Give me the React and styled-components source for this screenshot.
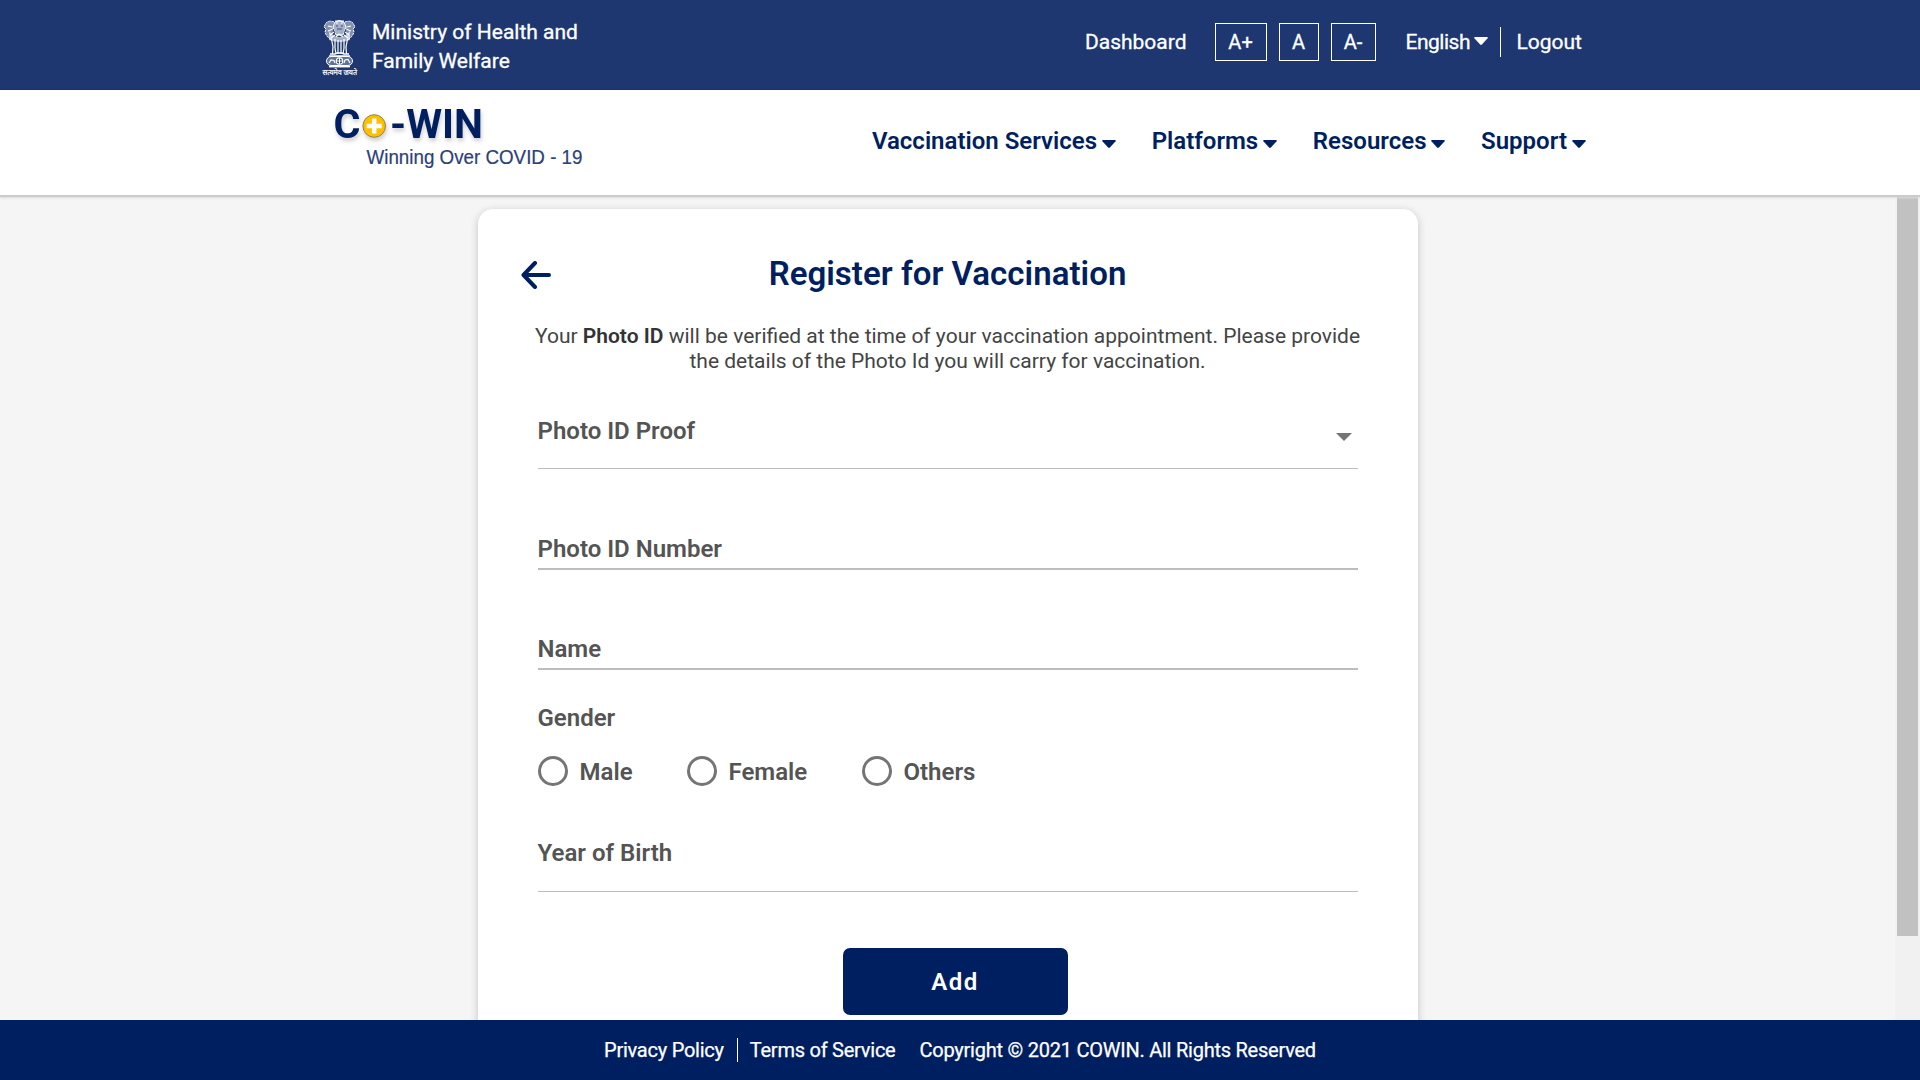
import React from "react";
import styled, { createGlobalStyle } from "styled-components";

const NAVY = "#001f60";

const Global = createGlobalStyle`
  * { box-sizing: border-box; }
  body { margin: 0; background: #f5f5f5; font-family: Roboto, "Noto Sans", sans-serif; overflow: hidden; }
  p, h1 { margin: 0; }
`;

const Page = styled.div`
  display: flex;
  flex-direction: column;
  height: 1080px;
  width: 1920px;
`;

const TopBar = styled.header`
  flex: none;
  height: 90px;
  background: #1e3770;
  border-bottom: 1px solid #1a2f6b;
  color: #fff;
  display: flex;
  justify-content: space-between;
  padding: 0 338px 0 321px;
  font-size: 21px;
  -webkit-text-stroke: 0.3px #fff;
`;

const Ministry = styled.div`
  display: flex;
  gap: 14px;
  padding-top: 17px;
`;

const MinistryName = styled.p`
  font-size: 21px;
  line-height: 29px;
  padding-top: 1px;
  width: 230px;
`;

const Tools = styled.nav`
  display: flex;
  align-items: center;
  height: 84px;
`;

const ToolLink = styled.a`
  line-height: 30px;
  margin-right: ${(p) => p.$gap || 0}px;
  letter-spacing: ${(p) => p.$spacing || 0}px;
`;

const SizeButton = styled.button`
  width: ${(p) => p.$width}px;
  height: 38px;
  padding: 0;
  margin-right: ${(p) => p.$gap}px;
  border: 1px solid #fff;
  background: none;
  color: #fff;
  font: 400 20px Roboto, sans-serif;
`;

const Divider = styled.span`
  width: 1px;
  height: ${(p) => p.$height}px;
  background: #fff;
  margin: 0 ${(p) => p.$right}px 0 ${(p) => p.$left}px;
`;

const BrandBar = styled.div`
  flex: none;
  position: relative;
  z-index: 1;
  height: 105px;
  background: #fff;
  box-shadow: 0 2px 0 #cbcbcb, 0 3px 2px #dcdcdc;
  display: flex;
  justify-content: space-between;
  padding: 0 334px 0 326px;
`;

const MainNav = styled.nav`
  display: flex;
  gap: 35.6px;
  padding-top: 36px;
`;

const NavItem = styled.a`
  display: flex;
  gap: 5px;
  font-size: 24px;
  line-height: 30px;
  font-weight: 600;
  color: ${NAVY};
  svg { margin-top: 14px; }
`;

const Body = styled.div`
  flex: 1;
  min-height: 0;
  display: flex;
  background: #f5f5f5;
`;

const Scroller = styled.main`
  flex: 1;
  overflow: hidden;
  padding-top: 14px;
`;

const Track = styled.div`
  width: 25px;
  background: #f1f1f1;
  padding: 0 2px;
`;

const Thumb = styled.div`
  height: 741px;
  background: #c1c1c1;
`;

const Card = styled.section`
  width: 940px;
  height: 900px;
  margin: 0 auto;
  padding: 44px 60px 0;
  border-radius: 15px;
  background: #fff;
  box-shadow: 0 2px 8px rgba(0, 0, 0, 0.2);
`;

const TitleRow = styled.div`
  display: grid;
  grid-template-columns: 30px 1fr 30px;
  margin: 0 -17px;
  height: 42px;
  svg { margin-top: 8px; }
`;

const Title = styled.h1`
  font-size: 33px;
  line-height: 42px;
  font-weight: 600;
  letter-spacing: 0.04px;
  text-align: center;
  color: ${NAVY};
`;

const Intro = styled.p`
  margin: 29px -10px 0;
  font-size: 21px;
  line-height: 25px;
  text-align: center;
  color: #444;
  b { font-weight: 600; color: #333; }
`;

const Field = styled.div`
  display: flex;
  justify-content: space-between;
  align-items: flex-start;
  height: ${(p) => p.$height}px;
  padding-top: ${(p) => p.$top}px;
  border-bottom: ${(p) => p.$line}px solid #bdbdbd;
  svg { margin: 17px 6px 0 0; }
`;

const Label = styled.label`
  font-size: 24px;
  line-height: 30px;
  font-weight: 600;
  color: #545454;
`;

const GenderTitle = styled.div`
  padding-top: 33px;
  height: 63px;
`;

const Radios = styled.div`
  display: flex;
  margin-top: 23px;
  height: 30px;
`;

const Radio = styled.div`
  display: flex;
  gap: 12px;
  width: ${(p) => p.$width}px;
  label { padding-top: 1px; }
`;

const Circle = styled.span`
  width: 30px;
  height: 30px;
  border: 3px solid #757575;
  border-radius: 50%;
`;

const AddButton = styled.button`
  display: block;
  width: 225px;
  height: 67px;
  margin: 56px 0 0 305px;
  border: 0;
  border-radius: 7px;
  background: ${NAVY};
  color: #fff;
  font: 600 24px Roboto, sans-serif;
  letter-spacing: 1.5px;
`;

const Footer = styled.footer`
  flex: none;
  height: 60px;
  background: ${NAVY};
  color: #fff;
  display: flex;
  align-items: center;
  padding-left: 604px;
  font-size: 20px;
  -webkit-text-stroke: 0.25px #fff;
`;

const FooterText = styled.span`
  letter-spacing: -0.24px;
  white-space: nowrap;
  margin-right: ${(p) => p.$gap || 0}px;
`;

const Caret = ({ w = 14, h = 8, fill = NAVY }) => (
  <svg width={w} height={h} viewBox="0 0 14 8">
    <path d="M1 0h12q1.4 0 .6 1.2L7.9 7.5q-.9.9-1.8 0L.4 1.2Q-.4 0 1 0z" fill={fill} />
  </svg>
);

const LanguageCaret = styled.span`
  display: flex;
  padding-bottom: 3px;
`;

const Emblem = () => (
  <svg width="37" height="68" viewBox="0 0 37 68" fill="none" stroke="#fff">
    <path d="M14 5q4-3 9 0l2 5-3 8h-7l-3-8z" fill="#fff" fillOpacity=".6" strokeWidth="1" />
    <path d="M13 5q-5-2-8 1l-2 4 2 2-1 3q2 6 7 8M24 5q5-2 8 1l2 4-2 2 1 3q-2 6-7 8" fill="#fff" fillOpacity=".45" strokeWidth="1" strokeDasharray="2.500 .8" />
    <path d="M8 14q10 12 21 0v9q-10 4-21 0z" fill="#fff" fillOpacity=".6" stroke="none" />
    <path d="M7 9l4 1M30 9l-4 1M7 14l5-2M30 14l-5-2M9 18l4-3M28 18l-4-3M15 6h2m3 0h2M14 4h9M10 21l4-3M27 21l-4-3M15 20l3-3 4 3" strokeWidth="1.1" />
    <path d="M15 9h2m3 0h2M16 12h5M12 12l2 4M25 12l-2 4" stroke="#1e3770" strokeWidth=".8" />
    <path d="M10.500 22l1.500 8-.5 7M14 22v9l1 6M17 23v14M20 23v14M23 22v9l-1 6M26.500 22L25 30l.5 7" strokeWidth="1.200" />
    <path d="M9 37h5l2-1h5l2 1h5M8 39h21" strokeWidth="1.500" />
    <rect x="5.500" y="39.500" width="26" height="9" rx="4.500" fill="#fff" fillOpacity=".3" />
    <circle cx="18.500" cy="44" r="3.200" fill="#1e3770" strokeWidth="1.200" />
    <path d="M18.500 41v6M15.500 44h6M8 46l2-3 3 .5 1 2.500M23 46l1-3 3-.5 2 3.500" strokeWidth="1.200" />
    <path d="M8 49.500h21" strokeWidth="1.800" />
    <text x="1.500" y="57.500" fontSize="7.500" textLength="34.500" lengthAdjust="spacingAndGlyphs" fill="#fff" stroke="#fff" strokeWidth=".2">सत्यमेव जयते</text>
  </svg>
);

const LogoMark = styled.g`
  filter: drop-shadow(1px 3px 2px rgba(0, 0, 0, 0.2));
`;

const Logo = () => (
  <svg width="270" height="90" viewBox="0 0 270 90">
    <LogoMark>
      <text x="7.500" y="48" fontFamily="Roboto" fontSize="41.500" fontWeight="700" textLength="27" lengthAdjust="spacingAndGlyphs" fill={NAVY}>C</text>
      <circle cx="48.200" cy="36" r="11.300" fill="#ffbf00" stroke="#8d8456" />
      <path d="M48.200 28.500v15M40.700 36h15" stroke="#fff" strokeWidth="4.500" />
      <text x="64" y="48" fontFamily="Roboto" fontSize="41.500" fontWeight="700" textLength="93" lengthAdjust="spacingAndGlyphs" fill={NAVY}>-WIN</text>
    </LogoMark>
    <text x="40.500" y="74.300" fontFamily="Liberation Sans" fontSize="19.500" textLength="216" lengthAdjust="spacingAndGlyphs" fill="#2b4179" stroke="#2b4179" strokeWidth=".2">Winning Over COVID - 19</text>
  </svg>
);

export default function App() {
  return (
    <Page>
      <Global />
      <TopBar>
        <Ministry>
          <Emblem />
          <MinistryName>Ministry of Health and<br />Family Welfare</MinistryName>
        </Ministry>
        <Tools>
          <ToolLink $gap={28}>Dashboard</ToolLink>
          <SizeButton $width={52} $gap={12}>A+</SizeButton>
          <SizeButton $width={40} $gap={12}>A</SizeButton>
          <SizeButton $width={45} $gap={30}>A-</SizeButton>
          <ToolLink $gap={4} $spacing={-0.5}>English</ToolLink>
          <LanguageCaret><Caret w={14} h={8} fill="#fff" /></LanguageCaret>
          <Divider $height={30} $left={12} $right={15.5} />
          <ToolLink>Logout</ToolLink>
        </Tools>
      </TopBar>
      <BrandBar>
        <Logo />
        <MainNav>
          {["Vaccination Services", "Platforms", "Resources", "Support"].map((t) => (
            <NavItem key={t}>{t}<Caret /></NavItem>
          ))}
        </MainNav>
      </BrandBar>
      <Body>
        <Scroller>
          <Card>
            <TitleRow>
              <svg width="30" height="28" viewBox="0 0 30 28" fill="none" stroke={NAVY} strokeWidth="4" strokeLinecap="round" strokeLinejoin="round">
                <path d="M14 2L2.500 14 14 26M3 14h25" />
              </svg>
              <Title>Register for Vaccination</Title>
            </TitleRow>
            <Intro>
              Your <b>Photo ID</b> will be verified at the time of your vaccination appointment. Please provide<br />
              the details of the Photo Id you will carry for vaccination.
            </Intro>
            <Field $height={95} $top={42} $line={1}>
              <Label>Photo ID Proof</Label>
              <svg width="16" height="8" viewBox="0 0 16 8"><path d="M0 0h16L8 8z" fill="#757575" /></svg>
            </Field>
            <Field $height={101} $top={65} $line={2}><Label>Photo ID Number</Label></Field>
            <Field $height={100} $top={64} $line={2}><Label>Name</Label></Field>
            <GenderTitle><Label>Gender</Label></GenderTitle>
            <Radios>
              {[["Male", 149], ["Female", 175], ["Others", 120]].map(([t, w]) => (
                <Radio key={t} $width={w}><Circle /><Label>{t}</Label></Radio>
              ))}
            </Radios>
            <Field $height={106} $top={52} $line={1}><Label>Year of Birth</Label></Field>
            <AddButton>Add</AddButton>
          </Card>
        </Scroller>
        <Track><Thumb /></Track>
      </Body>
      <Footer>
        <FooterText>Privacy Policy</FooterText>
        <Divider $height={24} $left={13} $right={12} />
        <FooterText $gap={24}>Terms of Service</FooterText>
        <FooterText>Copyright © 2021 COWIN. All Rights Reserved</FooterText>
      </Footer>
    </Page>
  );
}
